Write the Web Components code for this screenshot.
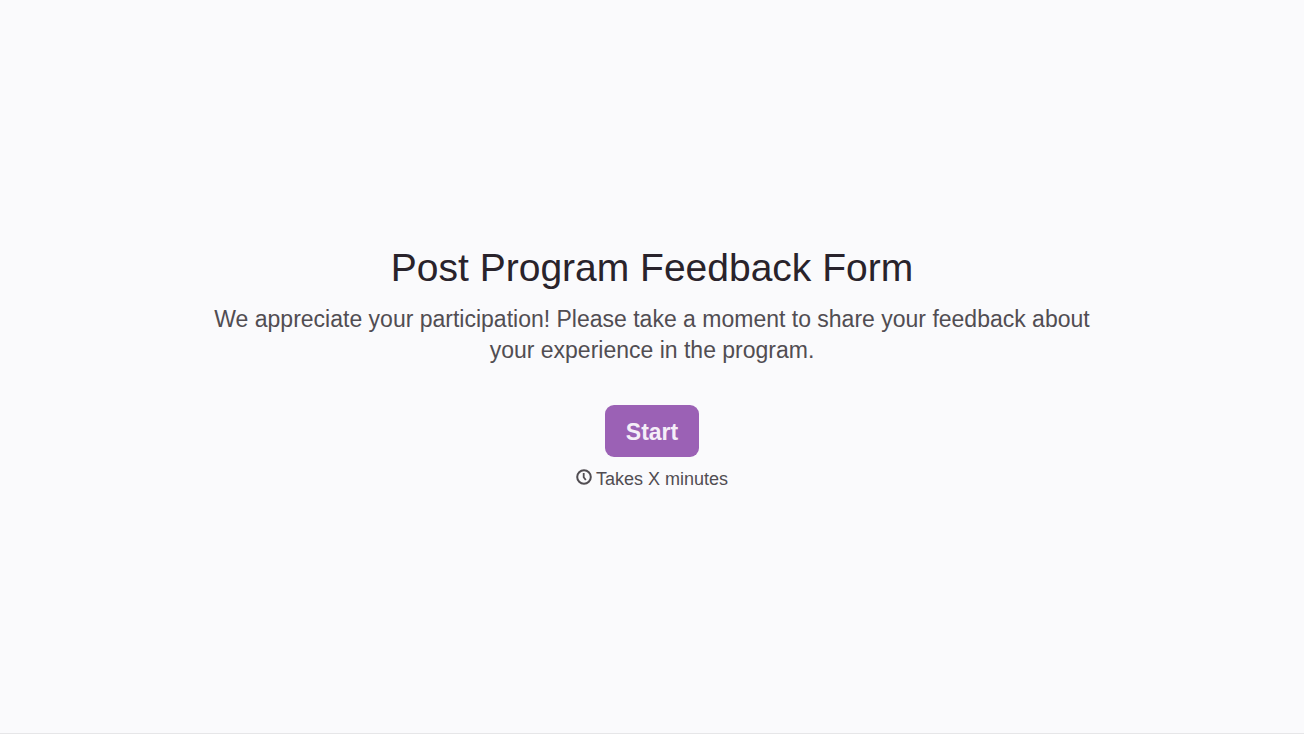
<!DOCTYPE html>
<html lang="en">
<head>
<meta charset="utf-8">
<meta name="viewport" content="width=device-width, initial-scale=1">
<title>Post Program Feedback Form</title>
<style>
  html, body { margin: 0; }
  body {
    background: #fafafc;
    color: #514d52;
    font-family: "Liberation Sans", Arial, sans-serif;
  }
</style>
</head>
<body>
<welcome-screen>
  <form-intro>
    <span slot="title">Post Program Feedback Form</span>
    We appreciate your participation! Please take a moment to share your feedback about your experience in the program.
  </form-intro>
  <start-button>Start</start-button>
  <time-estimate>Takes X minutes</time-estimate>
</welcome-screen>

<script>
  function define(name, markup) {
    const template = document.createElement("template");
    template.innerHTML = markup;
    customElements.define(name, class extends HTMLElement {
      constructor() {
        super();
        this.attachShadow({ mode: "open" }).append(template.content.cloneNode(true));
      }
    });
  }

  define("welcome-screen", `
    <style>
      :host {
        display: block;
        box-sizing: border-box;
        min-height: 100vh;
        border-bottom: 1px solid #e6e6e8;
      }
      main {
        box-sizing: border-box;
        min-height: calc(100vh - 1px);
        padding: 24px;
        display: flex;
        flex-direction: column;
        align-items: center;
        justify-content: center;
      }
    </style>
    <main><slot></slot></main>`);

  define("form-intro", `
    <style>
      :host { display: block; max-width: 900px; text-align: center; margin-bottom: 39px; }
      h1 { margin: 0 0 11px; font-size: 39px; line-height: 50px; font-weight: 400; color: #29232b; }
      p { margin: 0; font-size: 23px; line-height: 31px; }
    </style>
    <h1><slot name="title"></slot></h1>
    <p><slot></slot></p>`);

  define("start-button", `
    <style>
      :host { display: block; margin-bottom: 10px; }
      button {
        display: block;
        padding: 12px 21px 10px;
        border: 0;
        border-radius: 9px;
        background: #9b61b5;
        color: #f5eef8;
        font: bold 23px/30px "Liberation Sans", Arial, sans-serif;
        cursor: pointer;
      }
    </style>
    <button type="button"><slot></slot></button>`);

  define("time-estimate", `
    <style>
      :host { display: flex; align-items: center; gap: 4px; font-size: 18px; line-height: 24px; }
      svg { width: 16px; height: 16px; margin-bottom: 4px; }
    </style>
    <svg viewBox="0 0 16 16" fill="none" stroke="currentColor" aria-hidden="true">
      <circle cx="8" cy="8" r="6.8" stroke-width="2"/>
      <path d="M7.7 4v4.2l2.1 2.8" stroke-width="1.8"/>
    </svg>
    <span><slot></slot></span>`);
</script>
</body>
</html>
